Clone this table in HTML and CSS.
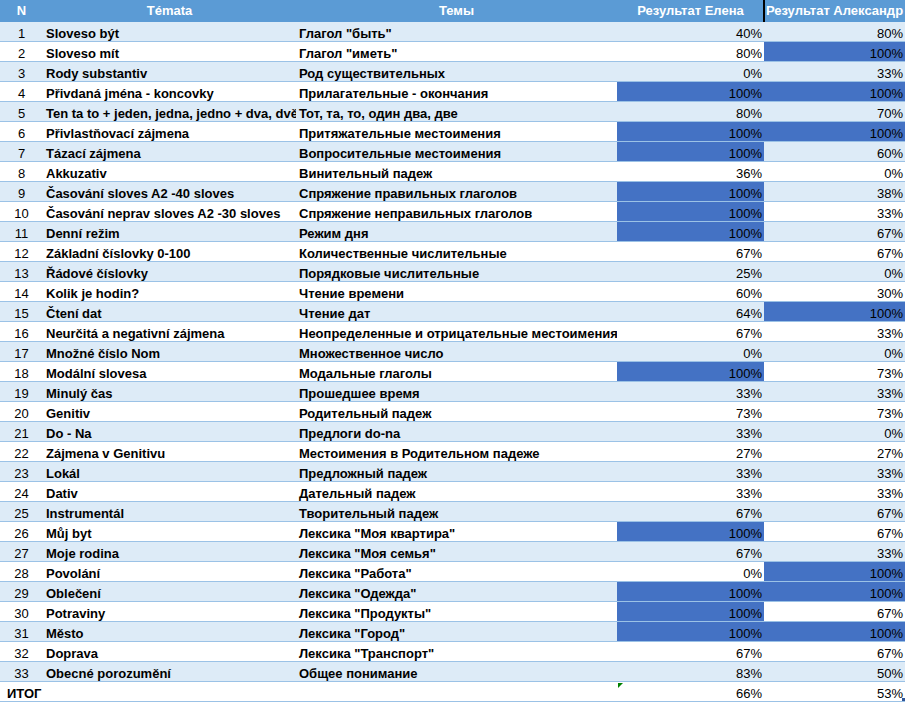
FILE: index.html
```html
<!DOCTYPE html>
<html lang="cs">
<head>
<meta charset="utf-8">
<title>Результаты</title>
<link rel="stylesheet" href="styles.css">
</head>
<body>
<table class="sheet">
  <colgroup>
    <col class="c-num">
    <col class="c-cz">
    <col class="c-ru">
    <col class="c-e">
    <col class="c-a">
  </colgroup>
  <thead>
    <tr>
      <th>N</th>
      <th>Témata</th>
      <th>Темы</th>
      <th class="h-e">Результат Елена</th>
      <th class="h-a">Результат Александр</th>
    </tr>
  </thead>
  <tbody>
    <tr class="alt"><td class="num">1</td><td class="txt">Sloveso být</td><td class="txt">Глагол "быть"</td><td class="pct">40%</td><td class="pct">80%</td></tr>
    <tr><td class="num">2</td><td class="txt">Sloveso mít</td><td class="txt">Глагол "иметь"</td><td class="pct">80%</td><td class="pct full">100%</td></tr>
    <tr class="alt"><td class="num">3</td><td class="txt">Rody substantiv</td><td class="txt">Род существительных</td><td class="pct">0%</td><td class="pct">33%</td></tr>
    <tr><td class="num">4</td><td class="txt">Přivdaná jména - koncovky</td><td class="txt">Прилагательные - окончания</td><td class="pct full">100%</td><td class="pct full">100%</td></tr>
    <tr class="alt"><td class="num">5</td><td class="txt">Ten ta to + jeden, jedna, jedno + dva, dvě</td><td class="txt">Тот, та, то, один два, две</td><td class="pct">80%</td><td class="pct">70%</td></tr>
    <tr><td class="num">6</td><td class="txt">Přivlastňovací zájmena</td><td class="txt">Притяжательные местоимения</td><td class="pct full">100%</td><td class="pct full">100%</td></tr>
    <tr class="alt"><td class="num">7</td><td class="txt">Tázací zájmena</td><td class="txt">Вопросительные местоимения</td><td class="pct full">100%</td><td class="pct">60%</td></tr>
    <tr><td class="num">8</td><td class="txt">Akkuzativ</td><td class="txt">Винительный падеж</td><td class="pct">36%</td><td class="pct">0%</td></tr>
    <tr class="alt"><td class="num">9</td><td class="txt">Časování sloves A2 -40 sloves</td><td class="txt">Спряжение правильных глаголов</td><td class="pct full">100%</td><td class="pct">38%</td></tr>
    <tr><td class="num">10</td><td class="txt">Časování neprav sloves A2 -30 sloves</td><td class="txt">Спряжение неправильных глаголов</td><td class="pct full">100%</td><td class="pct">33%</td></tr>
    <tr class="alt"><td class="num">11</td><td class="txt">Denní režim</td><td class="txt">Режим дня</td><td class="pct full">100%</td><td class="pct">67%</td></tr>
    <tr><td class="num">12</td><td class="txt">Základní číslovky 0-100</td><td class="txt">Количественные числительные</td><td class="pct">67%</td><td class="pct">67%</td></tr>
    <tr class="alt"><td class="num">13</td><td class="txt">Řádové číslovky</td><td class="txt">Порядковые числительные</td><td class="pct">25%</td><td class="pct">0%</td></tr>
    <tr><td class="num">14</td><td class="txt">Kolik je hodin?</td><td class="txt">Чтение времени</td><td class="pct">60%</td><td class="pct">30%</td></tr>
    <tr class="alt"><td class="num">15</td><td class="txt">Čtení dat</td><td class="txt">Чтение дат</td><td class="pct">64%</td><td class="pct full">100%</td></tr>
    <tr><td class="num">16</td><td class="txt">Neurčitá a negativní zájmena</td><td class="txt">Неопределенные и отрицательные местоимения</td><td class="pct">67%</td><td class="pct">33%</td></tr>
    <tr class="alt"><td class="num">17</td><td class="txt">Množné číslo Nom</td><td class="txt">Множественное число</td><td class="pct">0%</td><td class="pct">0%</td></tr>
    <tr><td class="num">18</td><td class="txt">Modální slovesa</td><td class="txt">Модальные глаголы</td><td class="pct full">100%</td><td class="pct">73%</td></tr>
    <tr class="alt"><td class="num">19</td><td class="txt">Minulý čas</td><td class="txt">Прошедшее время</td><td class="pct">33%</td><td class="pct">33%</td></tr>
    <tr><td class="num">20</td><td class="txt">Genitiv</td><td class="txt">Родительный падеж</td><td class="pct">73%</td><td class="pct">73%</td></tr>
    <tr class="alt"><td class="num">21</td><td class="txt">Do - Na</td><td class="txt">Предлоги do-na</td><td class="pct">33%</td><td class="pct">0%</td></tr>
    <tr><td class="num">22</td><td class="txt">Zájmena v Genitivu</td><td class="txt">Местоимения в Родительном падеже</td><td class="pct">27%</td><td class="pct">27%</td></tr>
    <tr class="alt"><td class="num">23</td><td class="txt">Lokál</td><td class="txt">Предложный падеж</td><td class="pct">33%</td><td class="pct">33%</td></tr>
    <tr><td class="num">24</td><td class="txt">Dativ</td><td class="txt">Дательный падеж</td><td class="pct">33%</td><td class="pct">33%</td></tr>
    <tr class="alt"><td class="num">25</td><td class="txt">Instrumentál</td><td class="txt">Творительный падеж</td><td class="pct">67%</td><td class="pct">67%</td></tr>
    <tr><td class="num">26</td><td class="txt">Můj byt</td><td class="txt">Лексика "Моя квартира"</td><td class="pct full">100%</td><td class="pct">67%</td></tr>
    <tr class="alt"><td class="num">27</td><td class="txt">Moje rodina</td><td class="txt">Лексика "Моя семья"</td><td class="pct">67%</td><td class="pct">33%</td></tr>
    <tr><td class="num">28</td><td class="txt">Povolání</td><td class="txt">Лексика "Работа"</td><td class="pct">0%</td><td class="pct full">100%</td></tr>
    <tr class="alt"><td class="num">29</td><td class="txt">Oblečení</td><td class="txt">Лексика "Одежда"</td><td class="pct full">100%</td><td class="pct full">100%</td></tr>
    <tr><td class="num">30</td><td class="txt">Potraviny</td><td class="txt">Лексика "Продукты"</td><td class="pct full">100%</td><td class="pct">67%</td></tr>
    <tr class="alt"><td class="num">31</td><td class="txt">Město</td><td class="txt">Лексика "Город"</td><td class="pct full">100%</td><td class="pct full">100%</td></tr>
    <tr><td class="num">32</td><td class="txt">Doprava</td><td class="txt">Лексика "Транспорт"</td><td class="pct">67%</td><td class="pct">67%</td></tr>
    <tr class="alt"><td class="num">33</td><td class="txt">Obecné porozumění</td><td class="txt">Общее понимание</td><td class="pct">83%</td><td class="pct">50%</td></tr>
    <tr class="total"><td class="txt label">ИТОГ</td><td></td><td></td><td class="pct flagged"><span class="flag"></span>66%</td><td class="pct last">53%<span class="handle"></span></td></tr>
  </tbody>
</table>
</body>
</html>
```

FILE: styles.css
```css
html, body {
  margin: 0;
  padding: 0;
  background: #ffffff;
}

body {
  font-family: "Liberation Sans", Arial, sans-serif;
  font-size: 13px;
  color: #000000;
}

.sheet {
  border-collapse: separate;
  border-spacing: 0;
  table-layout: fixed;
  width: 905px;
}

.c-num { width: 43px; }
.c-cz { width: 253px; }
.c-ru { width: 321px; }
.c-e { width: 147px; }
.c-a { width: 141px; }

.sheet th {
  background: #5b9bd5;
  color: #ffffff;
  font-weight: bold;
  text-align: center;
  height: 22px;
  line-height: 22px;
  padding: 0;
  white-space: nowrap;
  overflow: hidden;
}

.sheet th.h-e {
  box-shadow: inset -1px 0 0 #000000;
}

.sheet th.h-a {
  box-shadow: inset 1px 0 0 #000000;
}

.sheet td {
  height: 19px;
  line-height: 15px;
  padding: 0 3px;
  border-bottom: 1px solid #9bc2e6;
  vertical-align: bottom;
  white-space: nowrap;
  overflow: hidden;
}

.sheet tr.alt td {
  background: #ddebf7;
}

.sheet td.num {
  text-align: center;
  padding: 0;
}

.sheet td.txt {
  font-weight: bold;
}

.sheet td.label {
  padding-left: 7px;
}

.sheet td.pct {
  text-align: right;
  padding: 0 2px 0 0;
}

.sheet tr td.full {
  background: #4472c4;
}

.sheet td.flagged,
.sheet td.last {
  position: relative;
}

.flag {
  position: absolute;
  left: 1px;
  top: 1px;
  width: 0;
  height: 0;
  border-top: 5px solid #008000;
  border-right: 5px solid transparent;
}

.handle {
  position: absolute;
  right: 0;
  bottom: 0;
  width: 3px;
  height: 3px;
  background: #2f5597;
}
```
